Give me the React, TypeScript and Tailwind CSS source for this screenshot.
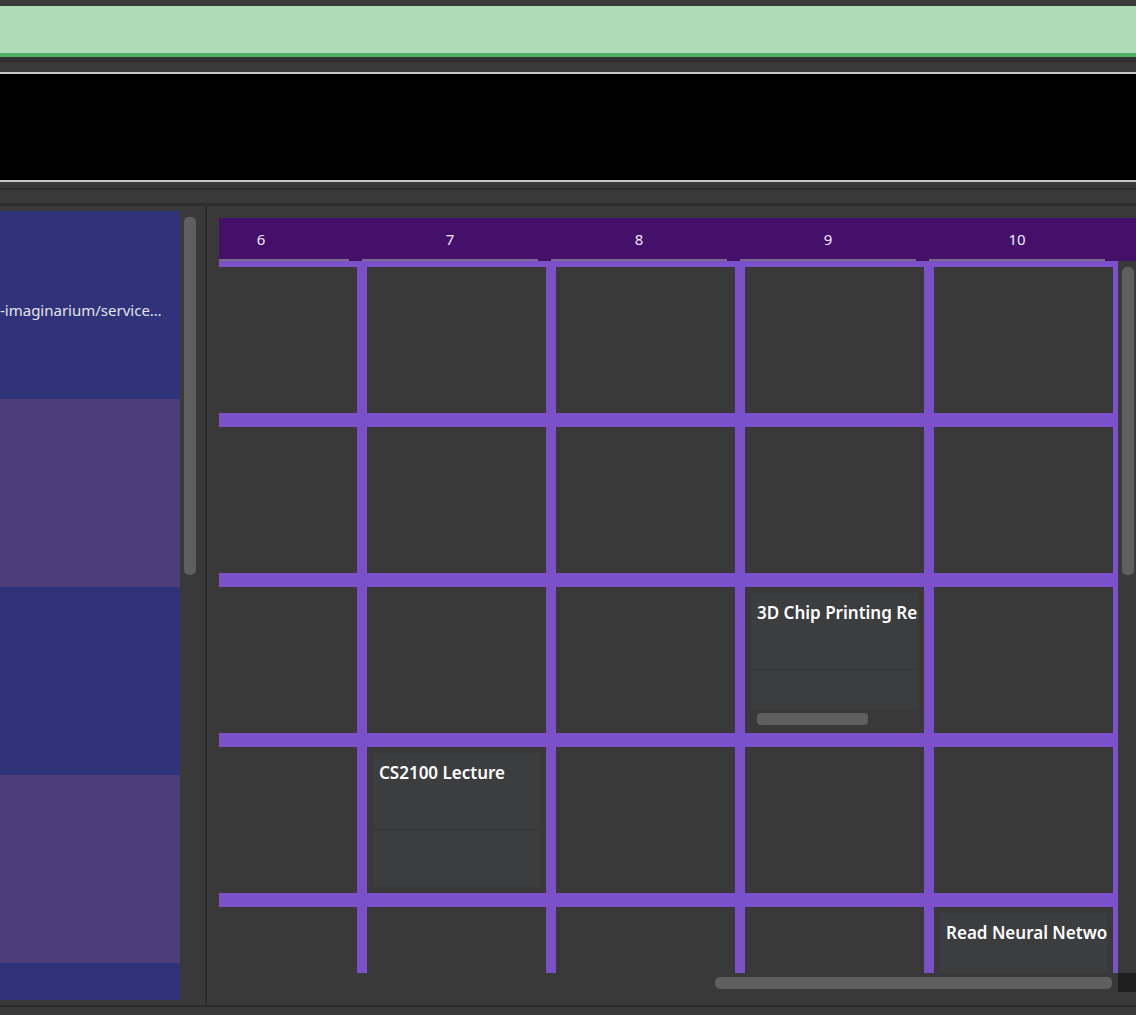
import React from "react";

const leftBlocks = [
  { bg: "bg-[#31337a]", text: "-imaginarium/service…" },
  { bg: "bg-[#4d3d78]", text: "" },
  { bg: "bg-[#31337a]", text: "" },
  { bg: "bg-[#4d3d78]", text: "" },
  { bg: "bg-[#31337a]", text: "" },
];

const days = ["6", "7", "8", "9", "10"];

type Ev = { title: string; overflow?: boolean };

// events keyed by `${row}-${col}`
const events: Record<string, Ev> = {
  "2-3": { title: "3D Chip Printing Research", overflow: true },
  "3-1": { title: "CS2100 Lecture" },
  "4-4": { title: "Read Neural Networks Paper" },
};

const Card = ({ ev }: { ev: Ev }) => (
  <div className="w-full h-full bg-[#3c3d3f] flex flex-col overflow-hidden">
    <div className="h-[76px] shrink-0 px-[6px] pt-[8px] text-white text-[17px] font-semibold leading-[24px] whitespace-nowrap overflow-hidden">
      {ev.title}
    </div>
    <div className="h-px bg-[#353637] shrink-0" />
    <div className="flex-1" />
  </div>
);

const Cell = ({ ev, first }: { ev?: Ev; first: boolean }) => (
  <div
    className={
      first
        ? "w-[189px] h-[159px] shrink-0 border-x-[5px] border-t-[6px] border-b-[7px] border-[#7b50c8]"
        : "w-[189px] h-[160px] shrink-0 border-x-[5px] border-y-[7px] border-[#7b50c8]"
    }
  >
    {ev && !ev.overflow && (
      <div className="h-full p-[6px]">
        <Card ev={ev} />
      </div>
    )}
    {ev && ev.overflow && (
      <div className="h-full p-[6px] flex flex-col">
        <div className="h-[116px] shrink-0 overflow-hidden">
          <Card ev={ev} />
        </div>
        <div className="mt-[4px] ml-[6px] h-[12px] w-[111px] rounded-[4px] bg-[#5f5f5f]" />
      </div>
    )}
  </div>
);

const App = () => {
  return (
    <div
      className="w-[1136px] h-[1015px] bg-[#393939] flex flex-col overflow-hidden"
      style={{ fontFamily: '"Noto Sans", "Open Sans", sans-serif' }}
    >
      <div className="h-[6px] shrink-0" />
      <div className="h-[51px] shrink-0 bg-[#aedbb6] border-b-4 border-[#4caf64]" />
      <div className="h-[6px] shrink-0 bg-[#313131]" />
      <div className="h-[9px] shrink-0" />
      <div className="h-[110px] shrink-0 bg-black border-y-2 border-[#c8c8c8]" />
      <div className="h-[6px] shrink-0" />
      <div className="h-[2px] shrink-0 bg-[#2f2f2f]" />
      <div className="h-[13px] shrink-0" />
      <div className="h-[3px] shrink-0 bg-[#2d2d2d]" />

      <div className="h-[799px] shrink-0 flex">
        {/* left list */}
        <div className="w-[205px] shrink-0 flex pt-[5px]">
          <div className="w-[180px] h-[789px] overflow-hidden flex flex-col">
            {leftBlocks.map((b, i) => (
              <div key={i} className={`h-[188px] shrink-0 flex items-center ${b.bg}`}>
                <span className="mt-[10px] text-[15px] text-[#e4e4ec] whitespace-nowrap">{b.text}</span>
              </div>
            ))}
          </div>
          <div className="w-[25px] pl-[4px] pt-[6px]">
            <div className="w-[12px] h-[358px] rounded-[5px] bg-[#5f5f5f]" />
          </div>
        </div>
        <div className="w-[2px] shrink-0 bg-[#2b2b2b]" />

        {/* calendar */}
        <div className="flex-1 min-w-0 pl-[12px] pt-[12px] flex flex-col">
          <div className="h-[43px] shrink-0 bg-[#45106a] overflow-hidden flex">
            <div className="flex ml-[-46px]">
              {days.map((d) => (
                <div key={d} className="w-[189px] shrink-0 flex">
                  <div className="w-[176px] h-[43px] flex flex-col">
                    <div className="flex-1 flex items-center justify-center text-[15px] text-[#ecebff] pt-[2px]">
                      {d}
                    </div>
                    <div className="h-[2px] bg-[#7a6a8c]" />
                  </div>
                </div>
              ))}
            </div>
          </div>

          <div className="h-[712px] shrink-0 flex">
            <div className="w-[899px] shrink-0 overflow-hidden">
              <div className="ml-[-46px] flex flex-col">
                {[0, 1, 2, 3, 4].map((r) => (
                  <div key={r} className="flex">
                    {days.map((_, c) => (
                      <Cell key={c} first={r === 0} ev={events[`${r}-${c}`]} />
                    ))}
                  </div>
                ))}
              </div>
            </div>
            <div className="w-[18px] shrink-0 pl-[4px] pt-[6px]">
              <div className="w-[12px] h-[308px] rounded-[5px] bg-[#5f5f5f]" />
            </div>
          </div>

          <div className="h-[20px] shrink-0 flex">
            <div className="w-[899px] shrink-0 pt-[4px] pl-[496px]">
              <div className="w-[397px] h-[12px] rounded-[5px] bg-[#5f5f5f]" />
            </div>
            <div className="w-[18px] h-[19px] bg-[#1f1f1f]" />
          </div>
        </div>
      </div>

      <div className="h-[2px] shrink-0 bg-[#2b2b2b]" />
      <div className="flex-1" />
    </div>
  );
};

export default App;
